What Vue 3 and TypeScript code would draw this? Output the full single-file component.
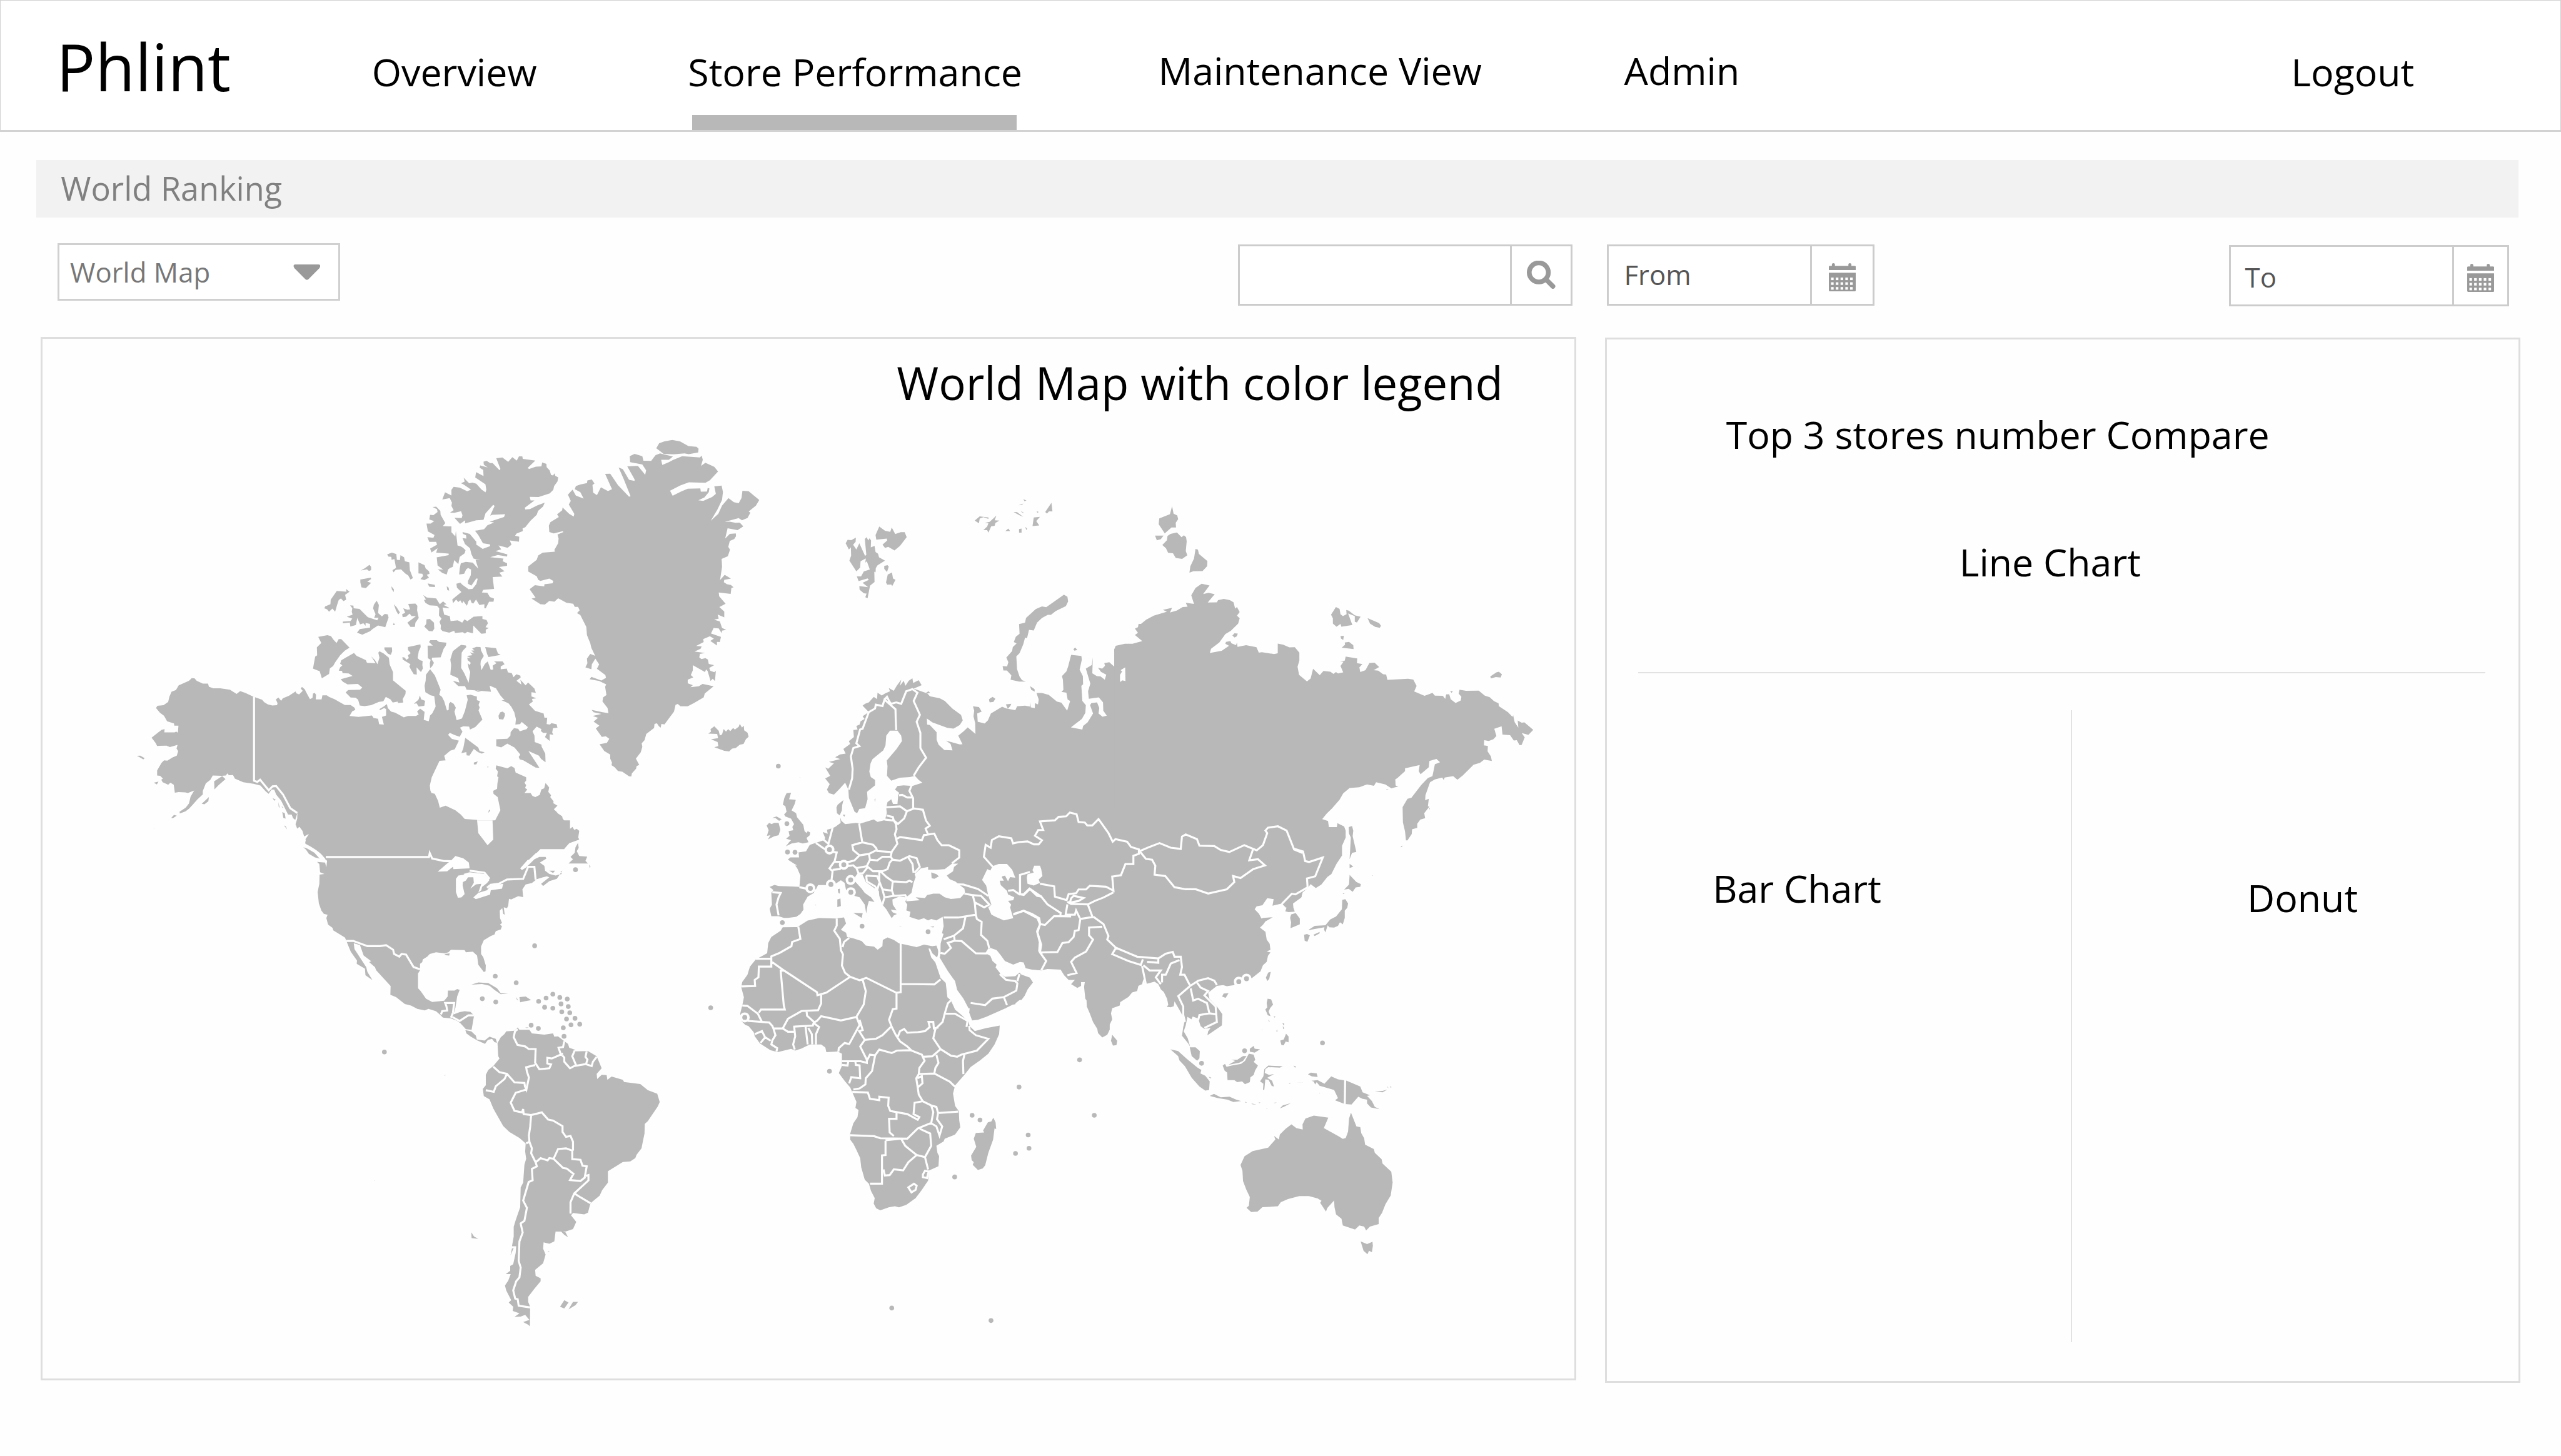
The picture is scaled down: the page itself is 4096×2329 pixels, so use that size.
<script setup lang="ts">
interface Sheet {
  x: number
  y: number
  sx: number
  sy: number
  land?: string
  water?: string
  isles?: string
  borders?: string
  dots?: number[][]
  rings?: number[][]
}

// The atlas is split into sheets; each keeps its own local grid.
const sheets: Sheet[] = [
  {
    x: 300, y: 980, sx: 0.63776, sy: 0.63776,
    land: 'M222 912 232 913 240 922 262 932 281 932 284 943 300 949 325 949 360 954 384 969 397 959 415 965 444 979 476 990 484 999 497 1007 513 1011 530 1010 532 1003 526 989 535 982 545 994 551 985 573 976 597 960 600 967 610 971 623 958 616 950 620 944 630 952 639 970 649 988 658 984 660 968 666 965 671 972 670 989 691 989 694 974 710 974 718 980 737 988 775 1009 796 1009 810 1019 813 1027 802 1032 792 1049 824 1052 873 1047 879 1056 895 1059 899 1079 916 1080 909 1052 924 1047 924 1024 917 1020 902 1028 900 1024 915 1015 927 1006 930 1020 942 1033 957 1037 988 1054 1003 1049 1032 1049 1042 1043 1036 1033 1047 1022 1063 1034 1060 1063 1078 1068 1083 1047 1091 1039 1103 1015 1098 977 1085 974 1066 963 1063 940 1067 921 1068 900 1083 880 1100 902 1121 954 1116 972 1126 980 1134 996 1144 1029 1150 1027 1151 1005 1157 998 1168 1005 1176 1019 1171 1033 1179 1064 1198 1058 1209 1030 1219 990 1215 974 1229 972 1252 979 1252 992 1263 995 1258 1009 1262 1018 1258 1029 1272 1062 1246 1089 1227 1098 1224 1087 1203 1086 1191 1091 1200 1105 1190 1124 1173 1118 1154 1110 1148 1117 1162 1132 1187 1138 1172 1169 1156 1174 1134 1193 1139 1209 1117 1211 1089 1270 1082 1300 1084 1318 1088 1327 1100 1330 1112 1356 1118 1380 1139 1373 1174 1389 1194 1405 1208 1421 1253 1424 1250 1441 1257 1451 1257 1472 1275 1495 1279 1508 1290 1516 1296 1507 1310 1497 1311 1484 1306 1442 1300 1434 1318 1426 1337 1389 1327 1342 1312 1330 1311 1319 1325 1312 1326 1294 1330 1270 1325 1267 1328 1249 1320 1239 1322 1227 1362 1238 1376 1230 1388 1237 1392 1253 1430 1270 1430 1282 1424 1290 1430 1299 1426 1309 1434 1314 1424 1327 1446 1327 1453 1338 1463 1342 1479 1334 1485 1314 1495 1310 1500 1291 1513 1307 1510 1323 1520 1335 1517 1342 1529 1357 1528 1364 1543 1373 1530 1386 1538 1393 1545 1401 1560 1411 1562 1420 1568 1427 1568 1445 1559 1465 1568 1470 1568 1530 1480 1530 1440 1568 705 1568 706 1552 690 1547 670 1532 651 1520 632 1510 641 1495 632 1495 647 1474 628 1484 622 1464 611 1449 603 1456 597 1440 603 1420 604 1397 596 1424 588 1418 583 1405 570 1405 560 1385 545 1355 527 1333 520 1315 510 1315 500 1330 490 1322 470 1300 445 1294 408 1288 378 1275 371 1262 356 1263 351 1256 345 1264 330 1265 298 1264 289 1280 273 1292 262 1320 262 1332 243 1350 225 1370 213 1383 200 1393 179 1401 178 1395 200 1380 212 1365 218 1340 231 1318 208 1327 199 1325 175 1324 161 1326 157 1297 145 1290 137 1297 117 1288 112 1279 118 1275 108 1265 97 1264 97 1246 113 1218 122 1209 134 1210 152 1199 168 1192 173 1176 167 1166 171 1153 143 1161 131 1156 97 1157 92 1147 77 1127 99 1110 113 1099 124 1096 123 1108 160 1108 166 1105 172 1109 174 1084 159 1084 158 1076 133 1068 122 1048 107 1037 93 1020 98 1012 120 1010 137 998 141 980 149 961 165 955 175 938 212 922Z',
    isles: 'M679 763 712 757 725 760 733 772 745 785 753 771 762 771 792 802 775 813 758 830 740 855 733 868 721 877 718 897 692 913 684 887 660 878 665 850 668 834 675 830 674 801 690 785ZM808 821 818 832 832 838 851 847 855 857 879 858 886 858 870 833 884 847 893 862 900 838 896 820 900 815 915 823 934 838 937 863 949 890 949 920 977 943 995 958 994 970 984 988 986 1000 967 1002 966 997 948 1000 940 989 923 980 914 996 898 998 870 1010 846 1013 829 1011 823 990 814 983 796 982 778 964 787 955 830 954 838 946 822 933 785 935 768 925 760 916 803 904 789 895 767 894 765 886 753 885 758 873 766 866 758 860 762 848 777 839ZM1003 800 1048 790 1049 800 1042 815 1038 840 1046 847 1056 850 1055 865 1057 877 1050 890 1034 873 1035 899 1024 898 1013 880 1008 870 1012 862 984 845 983 836 992 838 997 846 1006 840 1003 830 1013 822 1003 810ZM1079 782 1084 775 1107 775 1115 781 1142 784 1140 794 1132 806 1121 837 1090 838 1089 845 1097 857 1090 870 1083 876 1082 858 1085 846 1075 840 1074 795 1093 795ZM1156 900 1159 865 1156 845 1165 815 1184 800 1195 792 1212 794 1214 800 1203 811 1197 820 1195 875 1207 895 1222 929 1228 890 1222 875 1219 858 1226 865 1230 857 1219 847 1217 838 1230 840 1216 832 1236 829 1227 819 1243 823 1232 812 1243 812 1235 805 1250 799 1265 800 1267 812 1277 832 1266 850 1265 862 1268 884 1281 861 1291 852 1302 882 1311 881 1309 867 1323 858 1314 852 1345 852 1352 862 1338 870 1338 880 1360 878 1364 891 1378 894 1384 909 1395 898 1409 903 1410 910 1395 922 1413 936 1409 918 1428 938 1437 928 1460 950 1465 965 1449 963 1449 978 1467 985 1451 987 1454 997 1440 1007 1462 1030 1493 1040 1496 1055 1506 1055 1504 1078 1516 1080 1521 1075 1540 1079 1543 1091 1527 1093 1524 1108 1528 1117 1515 1115 1515 1139 1498 1125 1505 1110 1491 1110 1483 1103 1485 1096 1468 1087 1453 1104 1460 1120 1461 1143 1485 1152 1486 1160 1499 1185 1500 1216 1484 1204 1476 1192 1438 1175 1478 1236 1464 1235 1420 1209 1407 1206 1403 1197 1409 1188 1388 1163 1362 1149 1340 1162 1322 1158 1322 1133 1362 1131 1373 1120 1374 1107 1386 1093 1401 1095 1407 1104 1432 1096 1436 1089 1414 1070 1408 1078 1391 1080 1393 1060 1387 1035 1376 1015 1366 1003 1341 992 1352 992 1337 975 1321 949 1298 939 1303 961 1250 957 1268 962 1256 962 1245 956 1215 954 1209 941 1185 941 1165 922 1189 928 1184 912ZM1282 800 1321 804 1328 823 1338 828 1294 836 1289 825ZM1210 1128 1224 1138 1257 1163 1262 1176 1280 1180 1270 1185 1257 1180 1241 1168 1225 1192 1215 1191 1214 1179 1196 1183 1203 1165ZM1336 1036 1345 1033 1353 1039 1353 1048 1347 1062 1332 1060 1330 1048ZM1241 1217 1255 1213 1250 1224 1241 1224ZM1290 1231 1294 1232 1291 1237ZM1296 1387 1300 1391 1293 1399ZM1046 975 1051 989 1065 994 1062 1012 1042 1015 1034 1003 1024 1005 1041 990ZM1070 700 1082 698 1097 712 1098 734 1092 743 1079 742 1062 726 1069 716ZM918 801 945 801 946 815 941 828 931 824 918 808ZM794 649 806 650 807 660 828 662 858 692 892 703 897 694 881 694 886 681 877 660 880 647 890 632 898 648 895 677 909 689 919 680 930 682 933 693 921 728 895 722 875 735 866 743 838 755 819 748 829 735 866 730 866 716 850 713 850 723 842 714 830 718 820 695 815 720 795 726 793 711 768 714 768 708 795 706 802 697 782 690 803 683 800 672 802 660ZM746 597 781 600 779 590 792 600 776 611 780 629 770 634 761 624 753 630 747 648 740 672 730 661 718 672 711 664 701 660 704 653 723 645 724 629ZM833 523 847 515 864 503 870 510 870 522 862 525 855 519ZM831 556 869 549 870 554 856 564 870 568 851 587 835 584 831 566ZM928 465 945 459 961 464 963 485 974 486 976 468 989 476 992 490 1008 494 1010 522 1021 551 1012 556 1004 541 993 534 978 519 959 521 951 530 947 522 960 514 954 482 944 485 943 474 932 473ZM1041 494 1063 504 1067 516 1079 526 1081 535 1071 539 1079 549 1062 558 1048 554 1058 543 1055 535 1041 534ZM1074 570 1100 575 1101 583 1080 582ZM943 580 952 591 952 601 945 592ZM1143 580 1150 585 1152 596 1145 594ZM1004 644 1030 643 1037 651 1036 667 1042 695 1030 712 1028 727 1012 727 1001 712 1032 688 1016 688 1009 679 996 690 984 692 982 681 993 676 986 660 1001 665 1011 664ZM952 645 962 656 974 675 968 682 960 668ZM952 712 956 721 949 720ZM1058 612 1071 621 1105 624 1118 645 1130 635 1142 645 1132 648 1155 660 1128 657 1134 683 1154 688 1157 706 1183 703 1199 712 1207 700 1218 706 1240 690 1272 688 1272 698 1287 702 1292 714 1283 728 1295 731 1284 737 1284 750 1268 752 1239 722 1238 750 1217 745 1209 751 1201 746 1173 749 1170 741 1152 748 1128 742 1121 735 1122 722 1117 709 1124 697 1115 686 1116 660 1108 651 1081 649 1066 640 1061 630 1068 628ZM1160 232 1168 221 1190 224 1217 237 1231 231 1205 213 1195 208 1208 202 1204 188 1224 208 1236 206 1250 210 1268 230 1283 241 1286 232 1283 212 1246 187 1249 168 1276 182 1275 160 1262 152 1264 144 1291 151 1277 141 1276 130 1287 127 1300 135 1309 135 1334 161 1337 156 1322 118 1344 115 1365 131 1380 114 1396 126 1404 111 1416 111 1418 120 1463 126 1436 152 1440 157 1465 148 1485 147 1488 133 1503 138 1504 150 1515 162 1520 178 1527 180 1533 172 1535 181 1546 187 1543 202 1531 218 1528 232 1515 245 1475 258 1443 257 1446 270 1460 270 1425 297 1427 303 1444 301 1470 288 1497 278 1491 292 1473 308 1468 322 1445 344 1427 367 1417 371 1418 381 1395 390 1390 398 1405 401 1404 419 1371 415 1377 430 1363 441 1330 433 1340 447 1319 453 1362 465 1361 473 1328 467 1300 475 1348 480 1345 490 1361 497 1361 506 1332 511 1352 526 1333 531 1344 545 1309 547 1314 590 1275 593 1270 603 1290 604 1299 619 1314 625 1312 636 1296 636 1284 660 1279 660 1279 645 1261 648 1249 628 1239 643 1233 640 1228 628 1222 633 1216 651 1203 634 1199 642 1192 631 1185 637 1177 628 1166 641 1163 628 1175 618 1196 601 1180 585 1178 571 1192 567 1200 575 1222 591 1236 590 1250 572 1255 553 1250 552 1232 578 1220 571 1220 561 1230 540 1231 520 1220 514 1213 520 1206 535 1188 538 1190 516 1194 497 1212 492 1237 495 1257 517 1247 484 1265 486 1240 480 1232 464 1227 443 1209 428 1200 406 1214 408 1213 396 1202 391 1200 384 1226 391 1250 419 1250 430 1273 445 1300 435 1299 429 1274 425 1257 395 1245 380 1278 374 1290 360 1314 350 1298 347 1350 330 1354 320 1308 322 1300 325 1316 290 1311 286 1283 317 1276 340 1250 342 1209 353 1210 342 1191 355 1171 333 1197 334 1200 324 1195 309 1171 315 1155 314 1168 305 1160 290 1162 278 1154 262 1127 267 1137 241 1160 252ZM1092 294 1105 293 1120 308 1121 322 1138 352 1129 363 1150 364 1160 364 1160 385 1174 400 1176 380 1182 433 1194 436 1202 441 1211 450 1208 461 1190 474 1185 500 1170 486 1165 510 1155 514 1148 520 1143 538 1127 532 1111 519 1130 520 1110 505 1107 476 1150 468 1150 462 1105 459 1110 443 1088 458 1083 444 1108 430 1105 420 1080 420 1073 403 1095 405 1099 395 1075 382 1070 354 1085 354 1098 345 1080 339 1083 322 1095 323 1110 312 1108 302ZM24 1193 36 1192 52 1201 47 1206 34 1198ZM85 1290 102 1286 96 1296ZM258 1366 284 1342 282 1357 268 1368ZM82 1458 90 1454 86 1456ZM148 1417 158 1406 168 1409 154 1418ZM514 1345 526 1352 520 1355ZM535 1360 540 1382 536 1376ZM546 1376 553 1378 551 1381ZM549 1396 558 1400 561 1420 553 1417ZM555 1444 562 1448 567 1459ZM625 1523 640 1528 665 1543 684 1564 667 1560 645 1547 635 1532ZM332 1266 344 1277 320 1298 304 1314 303 1285Z',
    borders: 'M447 979 447 1283 459 1287 469 1279 500 1317 514 1303 527 1302 552 1333 578 1382 603 1399',
  },
  {
    x: 1000, y: 980, sx: 0.5102, sy: 0.54209,
    isles: 'M1003 96 1016 75 1040 67 1075 61 1110 67 1148 87 1185 90 1194 98 1192 114 1150 121 1130 118 1080 122 1036 120ZM883 130 905 120 940 130 945 149 980 150 990 137 1000 125 1020 118 1078 131 1060 145 1025 145 1030 167 1060 155 1080 145 1120 130 1200 135 1208 127 1213 145 1205 171 1225 158 1265 175 1282 195 1245 232 1225 243 1150 241 1110 255 1065 277 1077 298 1115 280 1145 268 1202 267 1204 281 1232 280 1235 265 1243 267 1240 283 1220 305 1193 317 1215 320 1255 303 1272 290 1265 258 1298 255 1304 282 1300 315 1280 355 1249 404 1283 375 1300 340 1329 308 1353 325 1375 330 1388 307 1392 277 1420 279 1468 316 1453 340 1420 365 1428 370 1415 392 1390 402 1375 393 1312 409 1335 408 1360 413 1380 412 1396 428 1370 444 1325 436 1314 480 1335 460 1362 458 1363 470 1355 482 1335 490 1328 515 1336 527 1326 555 1298 566 1300 600 1291 656 1312 634 1340 650 1310 655 1308 665 1322 674 1340 677 1352 687 1342 690 1339 715 1285 709 1287 725 1316 757 1288 771 1310 790 1310 815 1280 803 1285 820 1264 825 1290 832 1300 860 1319 868 1300 871 1298 882 1285 862 1262 860 1250 883 1295 898 1290 920 1277 919 1277 934 1247 915 1263 905 1245 895 1215 907 1217 920 1183 936 1208 938 1203 948 1176 960 1223 966 1200 970 1197 985 1207 992 1225 988 1236 994 1240 1013 1264 1018 1242 1030 1247 1042 1265 1048 1272 1042 1268 1086 1258 1076 1248 1085 1235 1043 1228 1036 1223 1047 1168 1018 1168 1040 1159 1060 1170 1070 1145 1080 1145 1095 1168 1103 1157 1112 1195 1108 1212 1098 1262 1108 1222 1138 1217 1155 1175 1178 1145 1193 1112 1193 1100 1183 1090 1187 1083 1215 1040 1270 1026 1268 1023 1284 1015 1278 1006 1265 995 1268 993 1285 958 1310 950 1337 937 1350 940 1365 933 1388 911 1415 926 1442 914 1447 912 1458 893 1478 890 1491 880 1490 850 1471 830 1468 815 1452 801 1443 803 1432 795 1415 795 1398 768 1383 747 1354 780 1348 791 1331 775 1320 757 1323 730 1287 746 1275 720 1258 740 1242 716 1234 755 1225 720 1218 711 1208 760 1218 787 1222 783 1200 760 1172 763 1155 778 1145 772 1110 777 1100 745 1085 702 1078 710 1068 755 1083 776 1072 773 1060 735 1033 745 1015 728 990 712 1015 710 1035 683 1027 692 1010 690 990 705 970 727 978 710 945 705 925 690 890 687 855 660 805 645 797 657 785 650 770 635 770 628 757 598 753 560 734 543 748 520 745 500 760 480 759 440 735 458 731 431 695 455 678 497 683 498 674 535 670 538 660 520 650 480 660 470 655 463 640 425 620 425 598 463 570 470 552 490 540 545 536 543 528 560 500 562 480 557 463 584 452 580 449 540 458 520 452 518 425 525 410 563 388 555 377 578 360 580 348 610 375 630 386 633 375 608 335 617 320 604 293 625 272 640 297 675 310 660 283 635 270 640 257 660 250 690 244 692 233 712 229 724 246 715 252 718 285 735 295 753 262 785 278 803 270 772 205 795 204 830 253 880 302 887 300 855 225 833 178 852 185 880 230 905 235 905 228 872 173 920 171 953 209 957 190 940 165 885 155ZM1238 1309 1250 1300 1248 1290 1265 1278 1285 1297 1290 1317 1300 1312 1307 1290 1318 1300 1328 1290 1337 1298 1350 1285 1358 1292 1375 1280 1380 1268 1390 1283 1398 1275 1400 1295 1415 1305 1420 1322 1408 1332 1397 1353 1380 1356 1362 1370 1345 1373 1332 1385 1310 1382 1265 1367 1283 1362 1280 1345 1250 1333 1282 1328 1278 1310Z',
    dots: [[1554, 1447]],
  },
  {
    x: 1700, y: 1050, sx: 0.57398, sy: 0.63776,
    land: 'M350 1165 370 1155 350 1125 362 1130 385 1110 365 1105 410 1095 390 1088 410 1078 432 1075 423 1058 450 1040 445 1030 465 1015 463 990 480 988 475 975 488 970 492 958 508 950 500 940 525 925 500 902 510 895 525 890 545 870 558 878 560 855 577 865 590 858 610 850 605 838 625 848 637 830 655 808 650 830 665 812 672 830 685 812 700 803 703 820 725 810 737 828 705 840 760 858 770 868 810 875 830 885 860 912 895 935 902 955 890 972 865 985 840 982 780 962 758 948 759 970 770 972 797 998 797 1025 805 1043 828 1062 861 1063 853 1040 835 1028 890 1042 901 1041 884 1010 905 995 922 980 953 1004 952 965 945 940 948 920 943 904 967 907 978 923 960 930 962 960 990 966 1003 955 1015 930 1060 906 1077 912 1113 918 1120 904 1152 902 1172 905 1173 888 1175 908 1191 911 1192 893 1204 897 1207 880 1198 856 1220 856 1247 863 1280 887 1298 891 1321 920 1333 885 1323 880 1318 855 1298 852 1306 845 1304 808 1300 795 1318 778 1325 760 1337 718 1378 722 1380 735 1371 772 1384 795 1385 825 1378 830 1382 885 1396 900 1394 928 1380 950 1336 980 1382 988 1385 975 1403 962 1425 930 1413 900 1418 893 1441 890 1450 910 1447 930 1463 942 1480 938 1466 920 1465 890 1448 872 1408 877 1405 850 1414 822 1396 768 1420 755 1424 727 1422 785 1440 795 1455 796 1472 808 1478 790 1457 780 1445 765 1462 768 1473 758 1470 748 1490 745 1528 775 1541 772 1533 790 1533 815 1555 815 1555 768 1530 745 1517 735 1510 700 1517 688 1568 678 1568 1495 250 1495 235 1478 200 1458 210 1450 245 1450 243 1432 273 1428 288 1405 310 1398 345 1388 350 1380 340 1358 360 1365 357 1350 378 1345 390 1340 412 1325 410 1305 415 1318 430 1330 475 1325 490 1328 545 1313 560 1322 590 1315 597 1290 595 1270 600 1250 615 1240 622 1257 640 1257 643 1225 647 1217 630 1205 640 1192 665 1190 700 1192 740 1180 725 1170 710 1155 690 1160 650 1162 615 1173 598 1155 600 1120 597 1100 635 1060 658 1030 655 1010 640 992 610 992 595 1010 592 1045 583 1063 540 1095 532 1110 527 1140 533 1160 550 1170 550 1190 518 1213 520 1240 510 1272 487 1275 478 1290 468 1285 445 1235 443 1205 430 1180 405 1205 385 1223 365 1218 357 1205 368 1185Z',
    isles: 'M552 285 567 255 590 270 611 274 617 258 631 282 653 275 669 275 677 293 650 325 628 341 603 328 590 332 580 320 599 305 597 298 555 302ZM432 315 440 303 455 304 473 295 472 310 462 320 475 338 487 315 510 361 515 357 509 300 516 293 523 305 528 297 534 305 533 330 548 325 552 347 562 353 566 366 590 378 560 395 553 405 552 420 547 418 548 455 530 468 520 514 511 510 516 497 505 496 488 483 487 470 522 474 500 458 525 447 520 442 484 452 477 435 494 435 505 417 529 410 517 380 511 385 513 370 492 380 490 403 475 417 447 378 454 360 453 330 445 338ZM587 397 600 394 605 400 598 419 587 408ZM601 428 618 421 622 442 632 447 619 470 615 464 599 465 594 457ZM950 233 970 218 1005 222 1005 227 985 221 970 226 967 243ZM990 242 1010 238 1037 215 1030 232 1049 233 1033 242 1030 252 1016 254 1005 277 1000 268 985 267 1000 255 1005 243ZM1187 222 1212 220 1197 235 1209 251 1182 253ZM1233 202 1258 169 1262 200 1248 200 1240 208ZM1073 271 1085 262 1092 271ZM1128 264 1138 262 1138 277 1128 277ZM1106 202 1120 203 1145 220 1130 214ZM1135 198 1150 207 1140 204ZM1145 156 1158 161 1150 163ZM1153 256 1160 262 1157 268ZM1126 178 1145 172 1140 176ZM1198 199 1207 202 1202 205ZM1308 501 1322 508 1325 525 1316 542 1275 560 1256 574 1243 574 1220 585 1200 602 1187 630 1168 628 1160 658 1152 656 1145 680 1130 712 1117 724 1120 770 1130 797 1140 810 1155 815 1128 815 1094 808 1097 792 1079 775 1065 775 1062 759 1080 760 1085 745 1077 728 1100 705 1103 690 1118 677 1107 672 1115 653 1130 642 1128 607 1152 602 1156 585 1195 553 1220 543 1237 546 1270 525ZM1012 875 1022 870 1033 877 1025 888 1010 890 1007 880ZM1172 831 1190 842 1191 851 1177 845ZM1075 897 1097 895 1093 903 1083 913ZM1346 698 1353 692 1362 701 1350 703ZM195 1218 213 1216 205 1240 232 1242 227 1258 215 1280 233 1290 237 1305 262 1332 267 1355 275 1362 280 1355 290 1360 288 1370 275 1380 283 1395 260 1400 243 1395 215 1400 192 1410 205 1395 213 1388 193 1382 207 1372 203 1355 222 1352 218 1340 225 1330 213 1310 190 1302 185 1295 195 1285 190 1265 180 1260 186 1235ZM145 1325 163 1325 170 1350 163 1370 145 1374 120 1385 130 1370 116 1372 123 1352 115 1335 125 1325 135 1330ZM137 1307 155 1302 175 1312 165 1318 150 1308ZM395 1270 400 1260 423 1243 418 1262 417 1280 408 1298 397 1290ZM420 1296 430 1296 427 1303ZM548 1240 552 1237 549 1250ZM247 1160 249 1160 249 1162ZM755 855 765 850 771 856 760 857Z',
    borders: 'M445 1205 458 1165 460 1130 453 1085 463 1055 487 1048 475 1038 490 988 500 985 525 925 550 912 553 898 580 903 588 880 632 915 633 950 635 990M588 880 598 870 608 888 615 895 635 890 655 895 675 850 700 842 720 855 705 885 730 935 717 960 732 1000 732 1055 755 1090 725 1125 705 1155',
  },
  {
    x: 2500, y: 1100, sx: 0.70153, sy: 0.63776,
    land: 'M95 620 100 607 130 600 155 600 187 590 163 568 173 560 163 545 173 540 175 528 183 528 200 513 225 498 268 484 255 477 285 470 278 487 300 480 320 467 336 466 330 452 357 456 348 425 362 398 382 383 408 389 387 420 405 416 425 421 402 451 432 450 436 442 455 438 475 442 487 450 492 473 498 467 507 485 498 498 507 508 502 527 478 553 460 565 440 595 413 618 409 633 448 625 472 607 460 600 462 593 476 590 480 598 495 605 498 595 500 611 528 605 562 612 570 632 580 630 620 637 632 634 632 599 650 603 670 613 688 612 703 632 703 660 697 683 702 712 728 736 740 725 748 690 770 713 782 698 805 701 815 709 823 702 830 707 847 703 838 680 848 665 836 663 852 661 855 646 893 653 892 670 910 673 900 685 903 702 920 695 933 669 950 668 965 684 947 695 962 697 978 710 988 711 992 730 1060 726 1077 729 1088 752 1080 772 1114 788 1140 777 1148 787 1174 788 1182 799 1185 783 1195 782 1200 800 1216 814 1233 805 1235 791 1226 780 1229 766 1250 770 1292 769 1312 787 1328 793 1342 807 1357 815 1358 825 1388 847 1403 864 1405 858 1410 883 1422 903 1420 877 1433 885 1442 884 1471 911 1455 929 1433 922 1443 938 1433 965 1426 966 1417 948 1407 949 1395 930 1370 928 1367 898 1343 907 1350 933 1340 945 1325 951 1310 948 1309 967 1322 969 1321 988 1332 1007 1335 1023 1310 1018 1296 1030 1275 1037 1240 1075 1222 1091 1208 1078 1180 1083 1177 1092 1172 1083 1148 1090 1132 1100 1117 1147 1116 1165 1128 1160 1125 1187 1130 1188 1113 1212 1116 1230 1100 1235 1090 1250 1090 1265 1073 1270 1072 1287 1058 1310 1053 1310 1050 1278 1043 1245 1042 1190 1058 1160 1071 1156 1103 1110 1125 1085 1140 1078 1148 1035 1165 1028 1153 1016 1130 1023 1128 1046 1101 1071 1095 1060 1098 1038 1050 1050 1050 1060 1025 1085 1018 1090 1019 1112 1028 1115 1005 1122 985 1108 955 1100 948 1113 925 1108 900 1118 868 1121 847 1140 835 1163 810 1195 793 1213 778 1233 797 1240 800 1262 826 1262 828 1248 850 1260 855 1275 855 1300 843 1330 843 1365 825 1395 808 1432 795 1442 775 1470 757 1482 740 1468 730 1483 712 1500 710 1515 685 1535 640 1568 130 1568 95 1200Z',
    water: 'M116 695 131 685 132 735 122 732 114 738 114 712 121 700Z',
    isles: 'M285 103 290 130 302 136 305 150 297 163 298 180 283 180 261 201 241 168 243 147 278 132ZM229 209 257 209 248 222 235 226ZM270 210 280 203 301 198 316 215 324 208 331 215 333 230 330 265 335 280 318 293 297 290 288 273 272 271 265 255 253 243 268 226ZM362 257 370 260 373 275 401 301 400 320 385 337 355 338 342 343 345 320 357 292ZM823 467 835 474 838 493 846 500 858 493 857 478 865 480 885 497 904 502 892 523 885 520 885 500 863 490 877 532 841 538 838 528 825 538 813 527 813 508 807 495ZM927 507 965 525 971 535 967 542 952 539 935 527ZM838 572 849 571 847 586 840 581ZM842 614 853 603 852 595 866 593 880 605 881 619ZM483 570 490 562 501 563 497 573 490 577ZM1330 718 1350 703 1358 701 1368 710 1364 722 1348 720 1332 725ZM865 1262 876 1258 880 1275 878 1295 890 1352 876 1355 868 1378 872 1300 866 1285ZM868 1395 880 1405 868 1410ZM868 1435 890 1460 905 1468 903 1478 888 1480 878 1496 865 1485 850 1488 866 1470ZM1035 1335 1041 1328 1040 1334ZM1198 771 1207 771 1203 777ZM941 1437 945 1437 943 1439ZM845 1503 851 1500 850 1504ZM988 1125 996 1125 990 1127ZM1130 1192 1132 1195 1130 1200Z',
    borders: 'M685 1340 715 1350 722 1385 735 1388 780 1372 755 1440 728 1448 730 1480 690 1505 678 1503 645 1540',
  },
  {
    x: 700, y: 1900, sx: 0.57398, sy: 0.75255,
    land: 'M0 -14 1068 -14 1068 12 1078 6 1085 15 1095 12 1105 18 1101 38 1105 45 1065 56 1045 73 950 73 935 85 918 90 868 133 875 138 892 130 925 105 945 98 970 98 973 103 947 115 965 125 968 140 985 150 1010 155 1035 150 1030 143 1037 140 1015 165 985 172 960 187 952 180 985 160 975 157 960 160 935 166 915 178 890 182 877 197 880 221 860 218 832 228 823 226 820 247 815 255 802 252 806 275 800 272 796 255 786 262 787 285 795 300 787 305 795 310 790 320 770 325 765 335 750 340 722 353 711 372 711 395 720 405 730 430 729 448 722 450 700 428 695 400 678 388 650 390 645 383 590 382 580 390 565 393 530 390 505 395 495 403 477 412 475 420 466 425 466 445 458 455 458 500 468 508 490 532 515 542 563 538 577 525 578 507 605 507 615 502 625 505 615 525 608 560 600 580 625 573 645 570 668 572 683 583 678 605 673 627 650 625 628 607 615 600 590 592 558 590 548 582 530 570 500 563 485 568 455 563 430 553 405 548 370 527 347 520 348 493 290 445 285 435 262 420 270 417 240 400 225 368 200 362 203 380 250 435 255 450 275 475 247 460 245 440 212 425 213 415 188 388 172 358 165 345 118 323 115 315 97 305 90 285 95 275 80 272 70 262 60 240 55 205 62 180 63 152 82 150 65 145 62 120 53 113 85 115 90 130 93 110 70 90 35 65 5 55 8 45 20 28 0 30ZM777 668 790 650 805 640 812 632 845 630 858 620 865 627 905 627 915 638 965 642 1000 638 1005 648 1020 647 1045 662 1060 670 1065 682 1087 688 1090 693 1140 692 1175 708 1195 745 1175 762 1177 778 1195 765 1215 766 1218 780 1235 770 1280 780 1285 787 1350 793 1380 812 1418 823 1428 848 1420 862 1380 907 1368 915 1367 945 1360 970 1355 990 1335 1010 1330 1020 1310 1030 1280 1032 1220 1060 1220 1095 1197 1118 1187 1135 1150 1158 1140 1187 1125 1192 1100 1190 1080 1188 1072 1195 1093 1215 1080 1237 1050 1245 1010 1245 1005 1275 985 1282 962 1278 960 1297 970 1315 960 1342 928 1362 930 1380 950 1388 950 1397 925 1420 900 1445 900 1460 908 1475 907 1535 900 1530 880 1522 905 1515 888 1500 870 1505 845 1506 865 1495 838 1488 840 1475 822 1462 832 1455 812 1425 807 1410 820 1395 830 1375 810 1375 828 1365 828 1350 840 1345 850 1310 852 1290 835 1290 842 1260 842 1230 850 1210 868 1170 870 1110 880 1095 885 1040 892 1022 888 1000 890 975 865 958 825 940 800 922 760 868 745 840 722 830 718 808 730 797 730 765 740 750 760 738 785 715 780 708Z',
    water: 'M695 -14 700 25 720 45 737 62 760 45 757 -14ZM537 143 575 118 592 108 608 95 640 102 662 115 665 133 600 135 598 128 575 142ZM618 223 610 205 610 165 620 155 668 150 650 170 638 175 637 185 645 212 632 222ZM665 145 725 150 745 168 735 178 715 190 712 200 700 207 712 180 690 182 668 195 682 177 680 160 660 160 640 150ZM680 222 700 208 735 200 750 185 800 180 795 195 750 200 747 213 690 227Z',
    isles: 'M1100 55 1103 70 1095 80 1105 95 1137 97 1130 110 1140 118 1062 118 1080 105 1070 98 1087 85 1090 68ZM1144 122 1150 127 1148 133ZM672 489 700 482 740 484 775 500 790 515 820 516 790 518 765 505 745 492 715 487ZM853 527 860 538 854 534ZM865 527 890 525 912 536 885 540 868 543ZM564 395 585 393 583 400 570 399ZM1028 1475 1045 1455 1062 1462 1045 1480ZM1062 1483 1080 1460 1100 1460 1090 1470ZM672 1247 683 1260 700 1267 673 1265ZM1030 1243 1050 1247 1060 1262 1045 1255ZM978 1305 986 1306 983 1308ZM648 628 672 632 690 645 694 657 725 660 745 648 770 655 775 667 765 665 755 655 738 658 727 670 697 660 670 648 652 638ZM835 1297 842 1295 829 1318ZM564 767 568 765 567 768ZM282 1088 284 1088 284 1090ZM985 140 1008 140 1000 147ZM888 620 902 620 895 622Z',
    borders: 'M88 98 502 98 505 86 515 103 560 110 592 111M665 140 725 146 745 165M735 192 750 183 782 180 815 167 880 165 900 128 925 128 930 168M170 355 198 355 255 371 305 371 330 368 358 382 362 395 383 403 392 395 410 397 440 435 466 442M550 580 555 570 575 568 572 555 567 545 603 545 598 575 590 590M596 588 625 600 660 583 683 583M858 625 847 632 842 650 857 673 888 678 902 686 930 686 928 728 945 748 985 745 992 733 977 730 977 713 995 715 1040 700M1045 662 1040 680 1022 682 1030 700 1045 712 1045 725 1068 745 1085 738 1130 732 1155 738 1160 725 1175 710M1087 690 1077 708 1092 735M1135 693 1130 710 1138 718 1132 733M928 735 892 742 895 755 903 773 893 810 887 800 885 790 845 788 815 762 785 757 760 740M893 810 850 820 830 850 845 875 875 880 880 870 882 885 912 888 955 880 980 902 1000 905 1038 922 1038 940 1052 955 1070 952 1080 970 1080 997M912 888 908 925 903 950 905 970 892 975M905 970 915 990 912 1005 930 1033 950 1020 978 1027 985 1020 1002 1022 1020 992 1052 990 1077 997 1077 1023 1110 1025 1118 1043 1135 1045 1128 1075 1142 1072 1142 1088 1085 1128 1070 1155 1070 1190M1002 1022 1040 1050 1055 1052 1082 1068 1068 1087 1110 1090 1130 1078M1085 1128 1110 1140 1150 1158M930 1033 935 1045 915 1053 918 1088 902 1093 880 1150 895 1172 885 1212 870 1220 878 1248 865 1275 862 1335 870 1355 865 1385 852 1397 840 1425 848 1450 858 1452 862 1472 908 1477M815 762 805 778 770 800 762 817 730 812',
    dots: [[1090, 137], [926, 370], [768, 463], [852, 483], [716, 532], [770, 542], [942, 540], [972, 530], [999, 518], [1027, 528], [1057, 533], [966, 558], [999, 561], [1032, 548], [1061, 556], [1035, 572], [1067, 575], [1054, 594], [1088, 592], [1072, 612], [1107, 610], [1041, 621], [1044, 647], [912, 613], [941, 623], [323, 695]],
  },
  {
    x: 1650, y: 1800, sx: 0.47832, sy: 0.33333,
    land: 'M380 580 930 580 985 600 970 700 935 775 910 800 880 795 848 815 850 850 868 890 840 885 850 905 870 915 855 925 845 945 830 910 820 885 800 850 785 790 783 755 760 735 720 695 705 645 680 635 668 660 668 690 700 740 715 770 745 800 762 832 735 825 728 860 722 912 715 850 690 800 665 790 625 750 618 700 600 682 560 720 530 715 490 715 480 745 400 735 405 650 390 600ZM257 728 280 714 300 722 395 727 430 740 475 745 470 770 440 795 418 850 420 885 405 915 385 935 345 942 325 942 300 930 265 930 257 880 268 850 265 770 275 750ZM930 580 1568 580 1568 1305 1520 1300 1490 1290 1480 1250 1462 1247 1430 1265 1390 1240 1370 1200 1350 1165 1320 1150 1300 1190 1320 1205 1330 1240 1350 1265 1345 1285 1370 1330 1390 1350 1440 1345 1460 1320 1470 1335 1510 1355 1525 1388 1500 1435 1485 1480 1470 1510 1445 1510 1440 1540 1400 1545 1395 1568 1215 1568 1190 1500 1160 1440 1150 1380 1115 1310 1075 1215 1080 1190 1080 1090 1095 1000 1090 935 1060 960 1035 950 1020 960 1000 945 975 955 950 945 930 935 935 900 915 890 920 850 910 830 920 800Z',
    water: 'M955 640 985 600 1020 590 1020 610 1060 610 1100 605 1135 568 1165 568 1145 590 1140 620 1110 650 1125 675 1150 690 1195 740 1198 770 1175 805 1130 812 1100 800 1075 775 1045 775 1015 785 1005 805 960 800 980 820 915 828 915 800 940 770 950 700 960 660ZM1280 680 1305 605 1320 615 1330 585 1360 570 1400 570 1425 610 1440 665 1415 660 1405 690 1390 650 1375 660 1385 685 1365 685 1370 715 1400 755 1405 780 1435 800 1430 820 1405 825 1420 850 1415 870 1430 945 1385 960 1345 935 1325 920 1310 870 1325 850 1310 790 1300 720Z',
    isles: 'M1035 628 1060 640 1072 655 1050 672 1037 668ZM1376 655 1390 652 1392 672 1380 668ZM585 745 595 740 595 775 588 770ZM583 815 598 808 600 860 583 868ZM660 908 705 910 700 942 680 925ZM475 850 482 855 478 856ZM880 998 893 998 886 1001ZM1030 1005 1050 1000 1045 1008Z',
    borders: 'M942 20 930 65 948 115 948 185 995 195 1010 270 1028 305 1008 325 1018 360M880 95 895 92 920 110 945 110M815 178 885 172 918 205 948 188M918 205 905 255 875 293 855 270 810 262M820 235 850 245 855 270 865 293 868 330 860 365 872 430 845 485 840 520M870 395 885 383 990 405 1000 370 1050 360 1065 405 1085 440 1120 440 1170 475 1170 525 1135 565M688 290 695 350 703 420 755 437 770 460 775 480 840 487M703 420 655 440 660 475 690 510 735 500 770 475M690 510 665 545 640 555 565 555M735 500 740 540 775 545 800 520 840 520 850 540 885 547 930 515 965 530 980 590 955 630M925 525 945 570 950 630M740 540 725 585 675 598 655 575M675 598 685 635 705 635 730 590 755 620 800 620 825 605 835 560 848 540M790 620 820 660 850 690 915 695 930 685 945 695M850 690 845 750 855 790 910 785 915 800M785 625 785 690 800 745 848 755M720 650 775 655 785 690M722 650 725 690 765 725 775 750 785 700M800 745 810 800 855 790M810 800 800 850M480 425 515 460 540 480 580 490 570 550 545 600 560 620 555 680 555 710M515 400 540 430 550 375 560 320M560 610 595 605 600 590 655 580M400 730 450 745M270 765 310 770 300 800 290 850 300 925M1095 940 1110 940 1165 940 1250 920 1255 950 1278 970 1275 1060 1305 1100 1315 1155M1200 935 1188 1015 1145 1065 1095 1090M1145 1065 1148 1100 1182 1103 1250 1187 1300 1188 1315 1155M1148 1100 1115 1115 1130 1150 1100 1190 1080 1185M1090 1050 1075 1120 1072 1215M1250 920 1245 840 1235 785 1195 775M1235 785 1275 790 1315 850 1290 870 1245 835M1160 710 1190 712 1260 742 1310 790M1430 920 1480 893 1520 915 1555 945 1560 985 1545 1035 1558 1110 1555 1170 1568 1195M1405 755 1430 750 1460 780 1480 780 1508 740 1545 790 1568 795M1463 775 1463 645 1510 625M1365 1330 1395 1370 1440 1380 1450 1395 1445 1445 1385 1490 1330 1500 1295 1545 1225 1530M1460 1330 1450 1380M1385 1490 1400 1545',
    dots: [[340, 291], [343, 487], [379, 489], [318, 975], [702, 1000], [1020, 1038]],
    rings: [[545, 470], [614, 575], [647, 680], [552, 711], [453, 738], [648, 765]],
  },
  {
    x: 1650, y: 2080, sx: 0.47832, sy: 0.47194,
    land: 'M320 118 390 117 440 85 495 73 575 75 615 70 625 100 600 130 625 145 630 165 660 172 700 185 720 207 760 213 777 228 800 210 802 180 825 168 855 180 880 197 910 203 965 215 1000 203 1040 210 1060 207 1072 240 1063 265 1040 245 1030 222 1022 222 1035 265 1055 290 1080 365 1105 390 1113 460 1130 475 1150 520 1180 545 1215 580 1220 600 1245 625 1300 610 1365 598 1362 640 1340 690 1310 735 1270 768 1225 800 1195 838 1150 890 1140 930 1150 990 1168 1015 1170 1060 1175 1095 1150 1130 1100 1150 1095 1163 1060 1185 1065 1220 1073 1235 1070 1285 1025 1305 1020 1355 990 1400 960 1440 915 1473 880 1485 860 1480 830 1485 790 1500 770 1490 758 1467 763 1440 745 1405 735 1370 715 1350 698 1290 693 1245 675 1205 660 1175 645 1155 645 1125 660 1075 680 1045 685 1010 670 1000 675 970 660 935 645 900 620 870 590 830 605 795 605 735 585 725 530 728 525 705 505 690 450 690 410 710 380 720 360 712 295 728 260 718 210 685 185 650 180 630 155 600 140 595 120 575 115 540 125 500 133 460 120 410 125 385 150 350 162 310 190 275 245 245 250 195 265 165 310 135ZM1160 400 1500 410 1485 450 1465 470 1440 490 1390 515 1300 555 1260 570 1232 573 1218 535 1222 500 1190 450Z',
    isles: 'M1334 1047 1345 1070 1348 1103 1340 1100 1333 1155 1310 1220 1295 1280 1283 1295 1260 1303 1235 1278 1240 1265 1230 1255 1227 1233 1252 1190 1240 1150 1250 1122 1290 1120 1285 1110 1308 1070 1325 1066Z',
    borders: 'M395 115 405 175 365 190 362 210 305 243 265 260 265 310 205 310 203 362 185 375 187 405 120 407M190 272 265 272M265 285 320 325 485 435 487 450 530 437 645 360M580 75 580 110 568 135 595 175 600 230 610 250 605 305 620 340 645 360 690 377 722 365 868 438 888 435 888 190M640 170 615 190 608 215M330 330 310 330 325 500 330 520 215 520 205 535M125 500 150 502 200 540 220 580 255 583 270 600 275 612 320 612 345 565 410 527 490 523 505 490 505 450M150 575 220 580M435 530 437 550 470 580 465 598 375 603 380 650 370 690 378 715M320 612 345 628 375 628M275 612 285 645 270 670 265 690 293 708 290 725M185 640 220 625 235 655 213 683M235 655 262 672M430 605 440 690M443 610 460 640 462 690M468 585 495 605 480 640 480 690M470 583 485 575 505 552 600 573 680 555M705 375 720 430 710 495 675 555 690 595 640 688 618 683 590 708 588 725M690 570 705 620 688 625 715 668 693 700 725 765 725 780 695 772 605 772M715 668 770 662 800 645 840 605M868 438 868 515 850 518 832 570 845 605 865 645 875 650 885 625 905 615 920 633 970 630 1005 625 1028 605 1022 580 1045 580 1048 612 1070 607M865 645 885 675 920 700 940 720M890 395 1050 397 1080 373M1130 475 1115 490 1100 540 1090 580 1055 615 1045 660 1080 713 1040 748 995 750M1100 540 1150 540 1210 575 1205 605M1218 600 1220 620 1250 645 1310 663 1255 720 1180 740 1160 750 1130 745 1080 713M765 743 785 715 845 732 870 720 935 718 990 740 1003 770 978 805 975 835M725 770 740 740 765 743 750 820 720 855 718 885 690 905 660 910M605 790 632 793 635 775M670 775 672 790 690 792 693 855 650 850 640 880M655 922 730 925 740 955 785 962 785 945 830 950 828 990 838 1015 920 1030 970 1058 978 1045 950 1030 955 975 990 968M975 835 1050 832 1055 805 1070 780 1060 740M1050 832 1125 872 1150 897M1195 740 1188 770 1190 835M975 835 963 855 970 900 975 935 995 968 1035 988 1060 995 1068 1025 1165 1018M968 855 990 845 993 880 970 900M868 1018 868 1053 832 1053 835 1120 855 1137M645 1133 760 1138 790 1148 920 1150 970 1100 1035 1073M1035 988 1045 1020 1035 1075 1060 1090 1075 1135 1088 1090 1063 1055 1068 1025M815 1160 815 1230 798 1232 798 1370 740 1370M815 1158 890 1150M890 1150 910 1185 940 1210 965 1230 1005 1240 1020 1300M805 1300 812 1330 835 1328 855 1300 900 1305 925 1265 965 1230M980 1102 1030 1125 1035 1185 1005 1240M925 1388 952 1370 965 1380 960 1400 940 1412ZM995 1325 1005 1307 1022 1310 1015 1342 995 1338Z',
    dots: [[545, 821], [1458, 898], [1232, 1036], [1270, 1059], [1502, 1132], [1506, 1197], [1441, 1222], [1148, 1337], [-27, 511], [845, 1977], [1323, 2038]],
    rings: [[137, 558]],
  },
  {
    x: 2100, y: 1820, sx: 0.57398, sy: 0.39541,
    land: 'M480 430 1568 430 1568 560 1490 655 1470 660 1445 665 1455 640 1440 627 1405 675 1385 675 1375 700 1395 715 1405 745 1450 740 1420 770 1398 800 1420 825 1425 870 1437 895 1440 930 1425 940 1440 945 1430 965 1425 1000 1410 1020 1400 1055 1365 1095 1340 1085 1300 1100 1295 1135 1265 1142 1250 1135 1225 1140 1190 1180 1195 1215 1225 1260 1247 1305 1245 1370 1225 1390 1187 1428 1190 1405 1200 1385 1175 1390 1160 1375 1150 1330 1128 1318 1123 1335 1107 1320 1100 1370 1092 1405 1108 1445 1118 1495 1110 1475 1085 1430 1090 1380 1095 1350 1090 1320 1075 1280 1055 1230 1052 1258 1040 1265 1024 1262 1030 1250 1025 1215 1012 1175 1000 1160 990 1130 975 1115 938 1130 930 1100 925 1130 910 1140 905 1170 885 1178 870 1205 837 1235 835 1255 805 1270 800 1300 805 1335 795 1365 795 1395 785 1425 765 1440 748 1415 745 1390 728 1350 715 1300 703 1260 702 1225 697 1215 692 1145 695 1118 680 1118 680 1140 665 1152 640 1130 655 1105 630 1105 612 1078 598 1045 545 1042 520 1050 480 1042Z',
    water: 'M465 490 490 480 485 465 492 440 515 440 520 460 525 500 510 520 515 540 490 555 465 545 462 510Z',
    isles: 'M805 1425 825 1460 822 1485 808 1488 800 1460Z',
    borders: 'M325 445 290 388 297 318 317 335 322 290 350 268 400 280 407 310 430 302 465 298 490 315 510 315 523 292 495 265 508 232 528 232 515 182 575 175 590 155 620 152 635 130 662 140 670 185 695 188 705 205 725 205 750 168 790 250 807 300 818 285 865 300 880 330 912 345 912 370 890 382 890 430 858 430 840 495 805 503 810 585 780 562 715 557 700 578 670 578 660 600 630 605 622 640 575 620 572 560 515 545M810 595 770 625 735 645 707 665 640 662 625 650M650 615 690 628 670 645 635 655 640 630ZM435 490 435 605 450 610 475 575 520 620 545 665 598 715 597 728M625 665 618 725 655 725 660 700 675 745M707 665 725 735M410 720 450 703 505 745 515 780 535 785 572 733 640 735M515 780 505 830 520 900 515 945 540 995 520 1050M515 945 585 943 605 890 630 885 650 855 655 820 670 815 677 750 730 738M730 738 770 780 790 850 785 870 820 918 905 970 990 980 1020 952 1048 942 1055 970 1080 970 1085 1030 1078 1075 1095 1075 1118 1140M765 795 712 800 712 845 728 870 700 940 655 975 640 1000 662 1065 625 1078M820 918 805 955 870 995 920 1018 928 985M945 1000 990 1005 990 980M930 1020 955 1050 1000 1050 980 1090 1000 1130M925 1025 940 1130M1005 1120 1005 1075 1020 1075 1040 1010 1075 990M1118 1140 1070 1200 1090 1260 1090 1310 1097 1350M1118 1140 1150 1110 1190 1095 1215 1110 1225 1135M1145 1120 1160 1150 1190 1170 1175 1195 1220 1260 1225 1350 1175 1385M1120 1155 1130 1225 1150 1215 1185 1240 1195 1300 1155 1310 1150 1340M1195 1300 1220 1305M915 355 940 400 965 405 978 440 975 492 1018 500 1055 565 1100 577 1140 577 1190 602 1265 577 1295 535 1290 500 1320 512 1370 460 1418 438 1390 402 1355 408 1370 345M915 355 955 330 995 308 1040 335 1080 342 1085 270 1100 258 1145 285 1155 323 1215 325 1240 348 1275 360 1335 320 1385 350 1410 320 1427 250 1420 235 1430 218 1470 210 1505 235 1535 345 1568 365',
    dots: [[674, 1571], [733, 1894]],
    rings: [[1313, 1115], [1344, 1098]],
  },
  {
    x: 2600, y: 1900, sx: 0.44643, sy: 0.66964,
    water: 'M650 290 660 280 690 276 715 252 748 255 742 278 790 270 812 285 808 300 830 305 830 360 690 360 685 352 705 332 745 317 710 315 685 322 672 305Z',
    isles: 'M787 270 840 240 870 240 900 225 890 250 848 270 850 285 857 298 825 300 808 297 815 283 800 270ZM838 308 862 303 883 322 883 342 835 355 838 335 833 320ZM1102 258 1118 255 1132 270 1128 285 1115 295 1115 320 1105 342 1090 335 1080 347 1060 353 1035 352 1027 345 1015 370 1008 360 1010 352 925 362 960 347 1015 345 1040 325 1070 315 1100 290ZM905 378 920 375 935 380 922 402 908 398ZM953 378 985 368 985 373 960 382ZM733 505 725 530 715 537 708 525 720 508ZM482 590 490 580 515 579 500 595ZM717 598 735 600 745 618 730 630 722 642 732 658 718 655 705 635 715 628 712 612ZM720 670 728 675 724 677ZM748 658 758 660 752 663ZM793 682 803 683 800 690ZM795 692 803 700 797 702ZM765 703 768 712 762 710ZM782 742 800 738 812 718 825 728 825 748 810 745 800 758 788 757ZM688 703 690 706 687 706ZM215 772 255 778 300 805 355 835 375 843 370 855 395 863 418 882 415 912 395 914 365 900 325 870 290 830 262 810 255 795ZM315 765 345 765 367 778 365 803 353 811 325 795ZM418 932 440 925 475 937 520 935 555 945 580 950 540 953 510 945 460 940ZM600 952 610 955 604 956ZM632 958 660 962 640 961ZM670 955 680 955 675 957ZM780 975 795 965 837 957 800 970ZM710 975 716 975 713 977ZM748 956 765 955 755 957ZM485 828 497 822 505 832 530 828 580 822 600 812 620 787 645 790 653 808 645 815 667 828 652 845 645 860 628 868 625 885 600 892 585 882 560 885 545 878 510 878 508 852 495 845ZM530 808 560 808 590 795 608 795 590 812 570 818 515 825 550 812ZM625 770 645 760 650 770 678 772 650 783 625 780ZM700 840 720 828 795 830 780 835 720 833 705 840 702 853 725 860 750 857 715 870 740 880 750 900 738 898 722 877 705 875 700 910 693 912 695 890 678 882 695 865ZM825 888 838 888 830 890ZM850 828 865 832 858 835ZM865 885 905 887 880 886ZM925 858 940 852 970 855 975 867 945 865ZM943 880 975 878 1010 890 1045 865 1080 875 1125 880 1195 900 1207 920 1245 930 1230 932 1255 950 1270 970 1295 978 1250 972 1230 958 1230 945 1205 942 1185 935 1165 950 1150 962 1115 960 1065 947 1080 940 1060 912 985 897 970 885 962 893 955 883ZM1270 917 1310 920 1335 910 1310 915ZM1335 898 1340 905 1337 904ZM1350 897 1356 902 1352 905ZM984 921 988 923 984 923ZM413 866 427 870 420 872ZM1147 990 1162 1015 1175 1037 1195 1040 1200 1060 1215 1078 1220 1100 1265 1115 1270 1128 1305 1150 1310 1165 1355 1193 1362 1230 1352 1275 1325 1305 1307 1335 1290 1352 1290 1373 1245 1382 1225 1395 1215 1382 1190 1378 1168 1392 1105 1378 1098 1355 1070 1340 1062 1315 1060 1292 1025 1318 1018 1330 988 1300 995 1293 975 1285 930 1277 880 1277 822 1287 785 1298 770 1312 690 1315 665 1330 632 1332 608 1317 620 1310 625 1280 607 1255 590 1225 587 1190 577 1170 598 1140 640 1122 720 1110 757 1082 750 1070 775 1082 780 1065 810 1045 840 1030 865 1043 898 1048 897 1030 912 1010 955 1000 1030 1007 1007 1043 1080 1070 1105 1080 1120 1077 1132 1055 1137 1010ZM1197 1433 1230 1442 1258 1434 1260 1448 1255 1470 1240 1465 1232 1477 1212 1465Z',
    borders: 'M1117 878 1115 962',
    dots: [[376, 820], [598, 777], [1000, 750]],
  },
]

const place = (s: Sheet) => `translate(${s.x} ${s.y}) scale(${s.sx} ${s.sy})`
const layer = (key: 'land' | 'water' | 'isles' | 'borders') =>
  sheets.filter((s) => s[key]).map((s) => ({ d: s[key] as string, t: place(s) }))
const points = (key: 'dots' | 'rings') =>
  sheets.flatMap((s) => (s[key] ?? []).map(([px, py]) => ({ cx: s.x + px * s.sx, cy: s.y + py * s.sy })))

const land = layer('land')
const water = layer('water')
const isles = layer('isles')
const borders = layer('borders')
const dots = points('dots')
const rings = points('rings')

const cells = [0, 1, 2].flatMap((r) => [0, 1, 2, 3, 4].map((c) => ({ x: 5 + c * 11, y: 33 + r * 11 })))
</script>

<template>
  <div class="page">
    <header class="topbar">
      <h1 class="brand">Phlint</h1>
      <a class="nav overview">Overview</a>
      <a class="nav active">Store Performance</a>
      <a class="nav raised">Maintenance View</a>
      <a class="nav raised">Admin</a>
      <a class="nav">Logout</a>
    </header>

    <div class="banner">World Ranking</div>

    <div class="controls">
      <div class="select">
        <span>World Map</span>
        <svg class="arrow" viewBox="0 0 63 36"><path d="M5 0H58Q63 0 62 5Q61 9 57 12L36 33Q31.500 38 27 33L6 12Q2 9 1 5Q0 0 5 0Z" /></svg>
      </div>
      <div class="field search">
        <span class="value"></span>
        <span class="addon">
          <svg class="glass" viewBox="0 0 66 65"><circle cx="27.500" cy="27" r="22" /><path d="M44 43 60 59" /></svg>
        </span>
      </div>
      <div class="field from">
        <span class="value">From</span>
        <span class="addon">
          <svg class="calendar" viewBox="0 0 62 65">
            <path d="M0 8Q0 6 3 6H7V3Q7 0 10.500 0T14 3V6H45V3Q45 0 48.500 0T52 3V6H59Q62 6 62 8V16H0ZM0 22H62V62Q62 65 59 65H3Q0 65 0 62Z" />
            <rect v-for="(c, i) in cells" :key="i" :x="c.x" :y="c.y" width="6" height="6" />
          </svg>
        </span>
      </div>
      <div class="field to">
        <span class="value">To</span>
        <span class="addon">
          <svg class="calendar" viewBox="0 0 62 65">
            <path d="M0 8Q0 6 3 6H7V3Q7 0 10.500 0T14 3V6H45V3Q45 0 48.500 0T52 3V6H59Q62 6 62 8V16H0ZM0 22H62V62Q62 65 59 65H3Q0 65 0 62Z" />
            <rect v-for="(c, i) in cells" :key="i" :x="c.x" :y="c.y" width="6" height="6" />
          </svg>
        </span>
      </div>
    </div>

    <main class="panels">
      <section class="panel map-panel">
        <svg class="map" viewBox="98 780 3528 2395">
          <path v-for="(p, i) in land" :key="'l' + i" class="land" :d="p.d" :transform="p.t" />
          <path v-for="(p, i) in water" :key="'w' + i" class="water" :d="p.d" :transform="p.t" />
          <path v-for="(p, i) in isles" :key="'i' + i" class="land" :d="p.d" :transform="p.t" />
          <path v-for="(p, i) in borders" :key="'b' + i" class="border" :d="p.d" :transform="p.t" />
          <circle v-for="(c, i) in rings" :key="'r' + i" class="water" :cx="c.cx" :cy="c.cy" r="11.500" />
          <circle v-for="(c, i) in rings" :key="'c' + i" class="land" :cx="c.cx" :cy="c.cy" r="5.700" />
          <circle v-for="(c, i) in dots" :key="'d' + i" class="land" :cx="c.cx" :cy="c.cy" r="5.500" />
        </svg>
        <h2 class="map-title">World Map with color legend</h2>
      </section>
      <section class="panel charts">
        <div class="upper">
          <p class="label top3">Top 3 stores number Compare</p>
          <p class="label line">Line Chart</p>
        </div>
        <div class="lower">
          <div class="bar"><p class="label">Bar Chart</p></div>
          <div class="donut"><p class="label">Donut</p></div>
        </div>
      </section>
    </main>
  </div>
</template>

<style>
html {
  font-size: calc(100vw / 589.8);
}
body {
  margin: 0;
  background: #fefefe;
}
</style>

<style scoped>
.page {
  width: 589.8rem;
  height: 335.3rem;
  overflow: hidden;
  background: #fefefe;
  font-family: 'Open Sans', 'Noto Sans', sans-serif;
  line-height: 1;
  color: #000;
}
h1, h2, p {
  margin: 0;
  font-weight: 400;
}
.topbar {
  box-sizing: border-box;
  height: 30.45rem;
  display: grid;
  grid-template-columns: 72.7rem 72.8rem 108.3rem 107.3rem 153.6rem 1fr;
  padding-left: 12.8rem;
  border: 1px solid #d2d2d2;
  border-bottom-width: 3px;
  background: #fff;
}
.brand {
  font-size: 14.95rem;
  padding-top: 7.6rem;
}
.nav {
  font-size: 8.76rem;
  padding-top: 12.15rem;
  white-space: nowrap;
}
.raised {
  padding-top: 11.75rem;
}
.active {
  display: flex;
  flex-direction: column;
  justify-content: space-between;
}
.active::after {
  content: '';
  width: 74.7rem;
  height: 3.5rem;
  margin-left: 1rem;
  background: #b8b8b8;
}
.banner {
  box-sizing: border-box;
  margin: 6.35rem 9.8rem 0 8.3rem;
  height: 13.3rem;
  padding: 2.8rem 0 0 5.7rem;
  background: #f2f2f2;
  color: #808080;
  font-size: 7.52rem;
}
.controls {
  display: flex;
  align-items: flex-start;
  height: 27.5rem;
  font-size: 6.3rem;
}
.select {
  box-sizing: border-box;
  width: 65.1rem;
  height: 13.2rem;
  margin: 5.9rem 206.7rem 0 13.3rem;
  border: 3px solid #d0d0d0;
  background: #fff;
  display: flex;
  justify-content: space-between;
  padding: 3.2rem 4.2rem 0 2.4rem;
  color: #777;
}
.arrow {
  width: 6.3rem;
  height: 3.6rem;
  margin-top: 1.3rem;
  fill: #999;
}
.field {
  box-sizing: border-box;
  display: flex;
  height: 14.1rem;
  border: 3px solid #ccc;
  background: #fff;
  color: #555;
}
.value {
  flex: 1;
  padding: 3.4rem 0 0 3.5rem;
}
.addon {
  box-sizing: border-box;
  display: flex;
  align-items: center;
  justify-content: center;
  border-left: 3px solid #ccc;
}
.search {
  width: 77rem;
  margin-top: 6.2rem;
}
.search .addon {
  width: 13.9rem;
}
.from {
  width: 61.6rem;
  margin: 6.2rem 81.6rem 0 8rem;
}
.from .addon {
  width: 14.4rem;
}
.to {
  width: 64.5rem;
  margin-top: 6.4rem;
}
.to .addon {
  width: 12.6rem;
}
.to .value {
  padding-top: 3.9rem;
  padding-left: 3.3rem;
}
.glass {
  width: 6.6rem;
  height: 6.5rem;
  fill: none;
  stroke: #999;
  stroke-width: 11;
  stroke-linecap: round;
}
.calendar {
  width: 6.2rem;
  height: 6.5rem;
  margin-top: 1rem;
  fill: #999;
}
.calendar rect {
  fill: #fff;
}
.panels {
  display: flex;
  align-items: flex-start;
  padding-left: 9.4rem;
  gap: 6.6rem;
}
.panel {
  box-sizing: border-box;
  border: 3px solid #dedede;
  background: #fefefe;
}
.map-panel {
  display: grid;
  width: 353.6rem;
  height: 240.3rem;
}
.map,
.map-title {
  grid-area: 1 / 1;
}
.map {
  display: block;
  width: 100%;
  height: 100%;
}
.map-title {
  font-size: 10.43rem;
  padding: 4.9rem 0 0 196.7rem;
}
.land {
  fill: #b8b8b8;
}
.water {
  fill: #fefefe;
}
.border {
  fill: none;
  stroke: #fefefe;
  stroke-width: 3.2px;
  vector-effect: non-scaling-stroke;
}
.charts {
  width: 210.8rem;
  height: 240.8rem;
  margin-top: 0.1rem;
  padding: 0 7.6rem 0 7.3rem;
}
.label {
  font-size: 8.76rem;
  white-space: nowrap;
}
.upper {
  box-sizing: border-box;
  height: 76.9rem;
  border-bottom: 2px solid #e2e2e2;
}
.top3 {
  padding: 17.7rem 0 0 20.2rem;
}
.line {
  padding: 20.5rem 0 0 73.9rem;
}
.lower {
  display: flex;
  height: 145.5rem;
  margin-top: 8.6rem;
}
.bar {
  box-sizing: border-box;
  width: 99.8rem;
  border-right: 2px solid #e2e2e2;
  padding: 36.6rem 0 0 17.1rem;
}
.donut {
  padding: 38.9rem 0 0 40.4rem;
}
</style>
